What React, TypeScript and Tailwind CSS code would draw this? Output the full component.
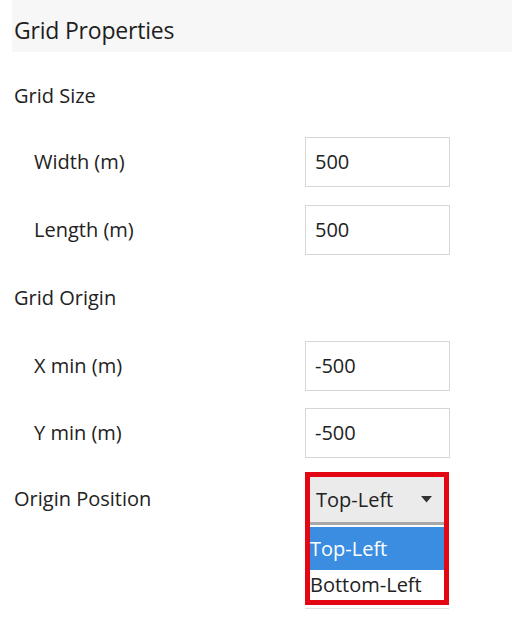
import React from "react";

const font = { fontFamily: '"Open Sans", "Noto Sans", sans-serif' };

function Field({ label, value }: { label: string; value: string }) {
  return (
    <div className="flex items-center h-[50px]">
      <div className="w-[305px] pl-[34px] text-[20px] text-[#222]">{label}</div>
      <div className="w-[145px] h-[50px] border border-[#d6d6d6] flex items-center pl-[9px] text-[20px] text-[#222]">
        {value}
      </div>
    </div>
  );
}

export default function App() {
  return (
    <div className="w-[512px] h-[625px] bg-white overflow-hidden relative" style={font}>
      <div className="ml-[12px] h-[52px] bg-[#f7f7f7] flex items-center pt-[9px] pl-[2px] text-[23px] text-[#1e1e1e] tracking-[-0.2px]">
        Grid Properties
      </div>
      <div className="flex flex-col">
        <div className="h-[50px] mt-[19px] flex items-center pl-[14px] text-[20px] text-[#222]">Grid Size</div>
        <div className="mt-[16px]"><Field label="Width (m)" value="500" /></div>
        <div className="mt-[18px]"><Field label="Length (m)" value="500" /></div>
        <div className="h-[50px] mt-[18px] flex items-center pl-[14px] text-[20px] text-[#222]">Grid Origin</div>
        <div className="mt-[18px]"><Field label="X min (m)" value="-500" /></div>
        <div className="mt-[17px]"><Field label="Y min (m)" value="-500" /></div>
        <div className="mt-[14px] flex items-start">
          <div className="w-[305px] pl-[14px] pt-[12px] text-[20px] text-[#222]">Origin Position</div>
          <div className="relative w-[144px]">
            <div className="border-[5px] border-[#e30613] flex flex-col">
              <div className="h-[48px] bg-[#ebebeb] flex items-center justify-between pl-[6px] pr-[12px] text-[20px] text-[#222] border-b-[3px] border-[#a8a8a8]">
                <span>Top-Left</span>
                <svg width="11" height="7" viewBox="0 0 11 7">
                  <path d="M0 0 L11 0 L5.5 6.5 Z" fill="#333" />
                </svg>
              </div>
              <div className="mt-[2px] h-[43px] bg-[#3a8de0] flex items-center text-white text-[20px]">Top-Left</div>
              <div className="h-[30px] bg-white flex items-center text-[20px] text-[#222]">Bottom-Left</div>
            </div>
            <div className="h-[4px] border-b border-[#e2e2e2]" />
          </div>
        </div>
      </div>
    </div>
  );
}
